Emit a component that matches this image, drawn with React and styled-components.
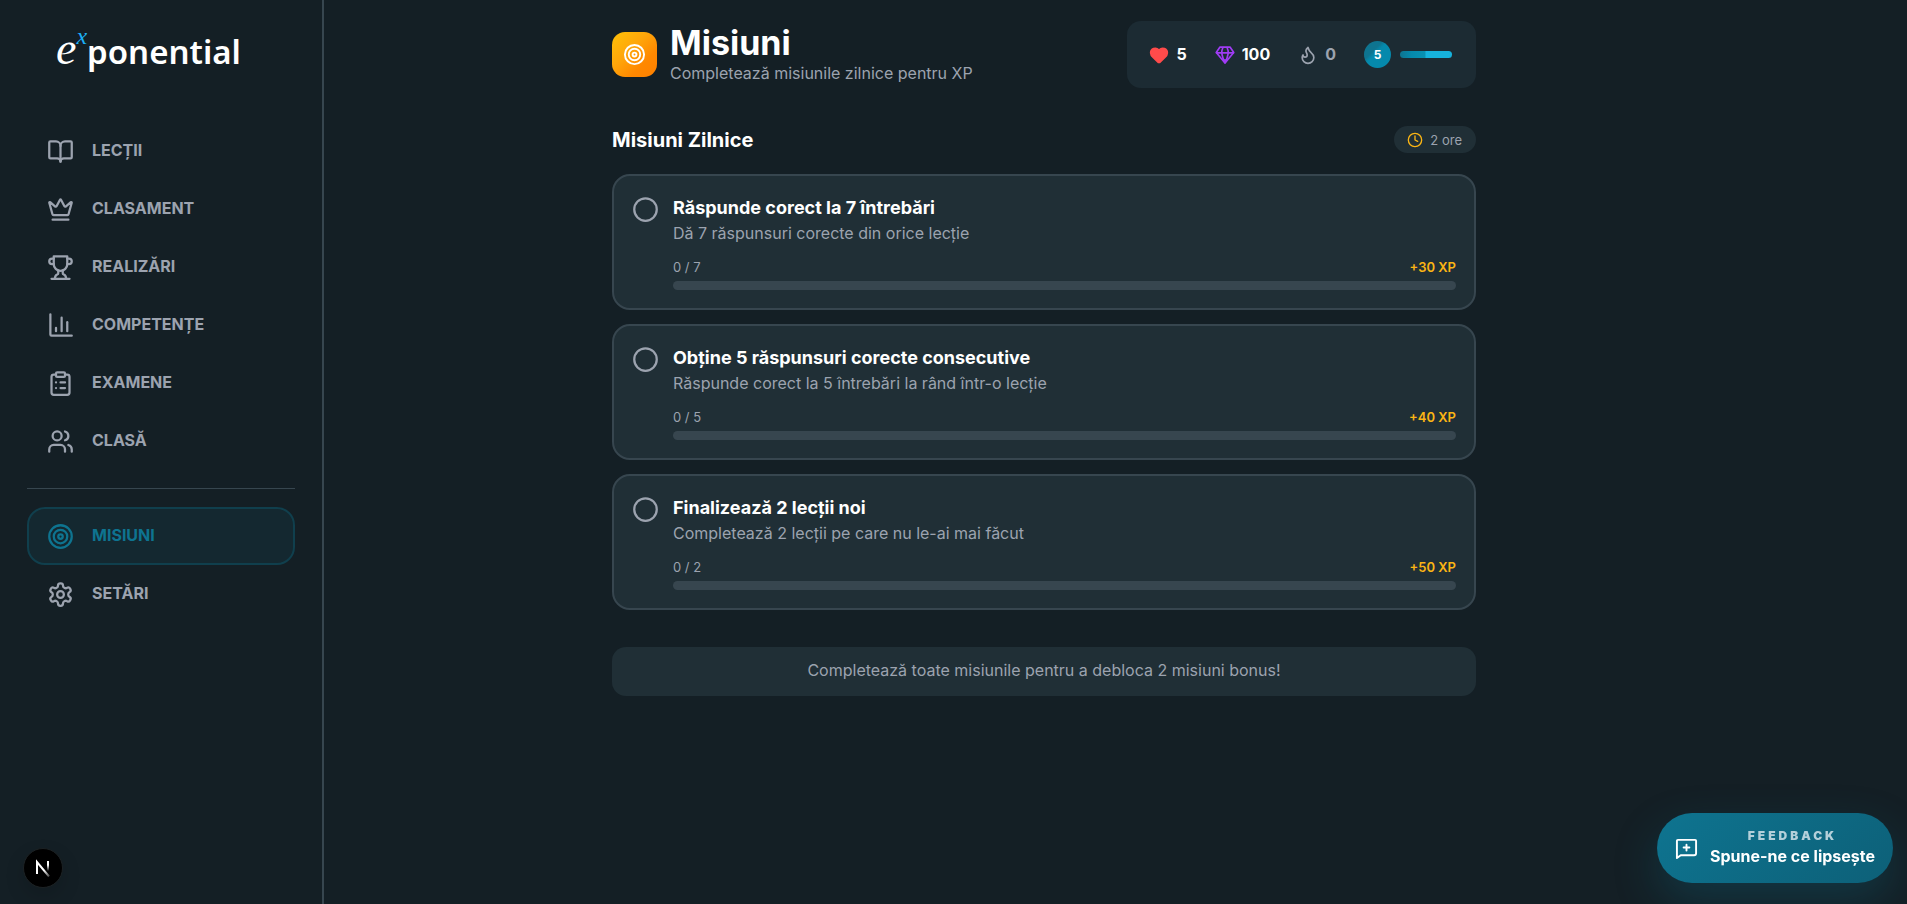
import React from "react";
import styled, { createGlobalStyle, css } from "styled-components";
import {
  BookOpen,
  Crown,
  Users,
  Target,
  Flame,
  Heart,
  Clock,
  Circle,
  ClipboardList,
} from "lucide-react";

const GlobalStyle = createGlobalStyle`
  *, *::before, *::after { box-sizing: border-box; }
  body {
    margin: 0;
    background: #141f25;
    color: #ffffff;
    font-family: Inter, "Liberation Sans", sans-serif;
    font-size: 16px;
  }
  h1, h2, h3, p, ul { margin: 0; padding: 0; }
  ul { list-style: none; }
`;

const Page = styled.div`
  display: flex;
  min-height: 100vh;
`;

const Sidebar = styled.aside`
  flex: 0 0 324px;
  border-right: 2px solid #37464f;
  padding: 25px 27px 18px;
`;

const Logo = styled.a`
  display: flex;
  align-items: baseline;
  padding-left: 29px;
  height: 97px;
  color: #ffffff;
  text-decoration: none;
  font: 600 33px/48px "Noto Sans", "Open Sans", sans-serif;
`;

const LogoE = styled.span`
  font: italic 400 46px/48px "Liberation Serif", serif;
`;

const LogoX = styled.sup`
  align-self: flex-start;
  color: #1cb0f6;
  font: italic 400 24px/22px "Liberation Serif", serif;
`;

const NavList = styled.ul`
  display: flex;
  flex-direction: column;
`;

const NavLink = styled.a`
  display: flex;
  align-items: center;
  gap: 18px;
  height: 58px;
  padding: 0 18px;
  border: 2px solid transparent;
  border-radius: 18px;
  color: #9ca3af;
  font-weight: 700;
  line-height: 24px;
  text-decoration: none;
  text-transform: uppercase;
  ${({ $active }) =>
    $active &&
    css`
      background: #142830;
      border-color: #103f4d;
      color: #0e7490;
    `}
  span { padding-bottom: 2px; }
`;

const Divider = styled.hr`
  height: 1px;
  margin: 18px 0;
  border: 0;
  background: #37464f;
`;

const Main = styled.main`
  flex: 0 1 1440px;
  min-width: 0;
`;

const Content = styled.div`
  width: 60%;
  min-width: 620px;
  margin: 0 auto;
  padding: 21px 0 36px;
`;

const Header = styled.header`
  display: flex;
  align-items: center;
  justify-content: space-between;
`;

const Heading = styled.div`
  display: flex;
  align-items: center;
  gap: 13px;
`;

const HeadingIcon = styled.div`
  display: grid;
  place-items: center;
  width: 45px;
  height: 45px;
  border-radius: 13px;
  background: linear-gradient(135deg, #ffc107 0%, #ffa60a 40%, #ff8800 70%, #ff8000 100%);
`;

const Title = styled.h1`
  font-size: 34px;
  font-weight: 700;
  line-height: 38px;
`;

const Subtitle = styled.p`
  color: #9ca3af;
  font-size: 16px;
  line-height: 23px;
`;

const Stats = styled.div`
  display: flex;
  align-items: center;
  gap: 28px;
  height: 67px;
  padding: 0 24px 0 22px;
  border-radius: 14px;
  background: #1c2b33;
`;

const Stat = styled.div`
  display: flex;
  align-items: center;
  gap: 7px;
  color: ${({ $muted }) => ($muted ? "#9ca3af" : "#ffffff")};
  font-weight: 700;
  line-height: 24px;
  span { padding-bottom: 2px; }
`;

const Level = styled.div`
  display: flex;
  align-items: center;
  gap: 9px;
`;

const LevelBadge = styled.span`
  display: grid;
  place-items: center;
  width: 27px;
  height: 27px;
  padding-bottom: 1px;
  border-radius: 50%;
  background: linear-gradient(135deg, #0e7490 35%, #0589ac 45%);
  font-size: 12px;
  font-weight: 700;
`;

const LevelBar = styled.div`
  width: 52px;
  height: 7px;
  border-radius: 4px;
  background: linear-gradient(90deg, #0e7490 0%, #0589ac 22%, #0891b2 48%, #16b2dc 50%);
`;

const SectionHead = styled.div`
  display: flex;
  align-items: center;
  justify-content: space-between;
  margin: 38px 0 21px;
`;

const SectionTitle = styled.h2`
  padding-top: 1px;
  font-size: 20px;
  font-weight: 700;
  line-height: 26px;
`;

const TimePill = styled.div`
  display: flex;
  align-items: center;
  gap: 7px;
  height: 27px;
  padding: 0 14px 0 13px;
  border-radius: 14px;
  background: #202f36;
  color: #9ca3af;
  font-size: 13px;
`;

const Missions = styled.ul`
  display: flex;
  flex-direction: column;
  gap: 14px;
`;

const Card = styled.li`
  display: flex;
  align-items: flex-start;
  gap: 14px;
  padding: 18px;
  border: 2px solid #37464f;
  border-radius: 18px;
  background: #202f36;
  > svg { flex: none; margin-top: 2px; color: #9ca3af; }
`;

const CardBody = styled.div`
  flex: 1;
`;

const CardTitle = styled.h3`
  font-size: 18px;
  font-weight: 700;
  line-height: 27px;
`;

const CardText = styled(Subtitle)`
  line-height: 25px;
`;

const ProgressRow = styled.div`
  display: flex;
  justify-content: space-between;
  margin: 12px 0 5px;
  color: #9ca3af;
  font-size: 13px;
  line-height: 18px;
`;

const Reward = styled.span`
  color: #fbb514;
  font-weight: 600;
`;

const Track = styled.div`
  height: 9px;
  border-radius: 5px;
  background: #37464f;
  overflow: hidden;
`;

const Fill = styled.div`
  height: 100%;
  background: #fbb514;
`;

const Note = styled.p`
  margin-top: 37px;
  padding: 12px 14px 14px;
  border-radius: 14px;
  background: #202f36;
  color: #9ca3af;
  line-height: 23px;
  text-align: center;
`;

const FeedbackButton = styled.button`
  position: fixed;
  right: 14px;
  bottom: 21px;
  display: flex;
  align-items: center;
  gap: 12px;
  height: 70px;
  padding: 0 18px;
  border: 0;
  border-radius: 35px;
  background: linear-gradient(135deg, #0e7490, #0d6078);
  box-shadow: 0 18px 45px rgba(14, 116, 144, 0.28);
  color: #ffffff;
  font-family: inherit;
`;

const FeedbackText = styled.span`
  display: flex;
  flex-direction: column;
  align-items: center;
  padding-bottom: 2px;
`;

const FeedbackLabel = styled.span`
  color: #b4d0da;
  font-size: 12px;
  font-weight: 900;
  letter-spacing: 3px;
  line-height: 18px;
`;

const FeedbackAction = styled.span`
  font-size: 16px;
  font-weight: 700;
  line-height: 23px;
`;

const DevBadge = styled.button`
  position: fixed;
  left: 23px;
  bottom: 16px;
  display: grid;
  place-items: center;
  width: 40px;
  height: 40px;
  padding: 0;
  border: 1px solid #1d2224;
  border-radius: 50%;
  background: #000000;
  box-shadow: 0 8px 20px rgba(0, 0, 0, 0.14);
`;

const stroke = {
  fill: "none",
  stroke: "currentColor",
  strokeWidth: 2,
  strokeLinecap: "round",
  strokeLinejoin: "round",
  viewBox: "0 0 24 24",
  "aria-hidden": true,
};

const TrophyIcon = ({ size }) => (
  <svg width={size} height={size} {...stroke}>
    <path d="M6 9H4.5a2.5 2.5 0 0 1 0-5H6" />
    <path d="M18 9h1.5a2.5 2.5 0 0 0 0-5H18" />
    <path d="M4 22h16" />
    <path d="M10 14.66V17c0 .55-.47.98-.97 1.21C7.85 18.75 7 20.24 7 22" />
    <path d="M14 14.66V17c0 .55.47.98.97 1.21C16.15 18.75 17 20.24 17 22" />
    <path d="M18 2H6v7a6 6 0 0 0 12 0V2Z" />
  </svg>
);

const ChartIcon = ({ size }) => (
  <svg width={size} height={size} {...stroke}>
    <path d="M3 2v18a1 1 0 0 0 1 1h18" />
    <path d="M8 17v-3" />
    <path d="M13 17V5" />
    <path d="M18 17V9" />
  </svg>
);

const GearIcon = ({ size }) => (
  <svg width={size} height={size} {...stroke}>
    <path d="M12.22 2h-.44a2 2 0 0 0-2 2v.18a2 2 0 0 1-1 1.73l-.43.25a2 2 0 0 1-2 0l-.15-.08a2 2 0 0 0-2.73.73l-.22.38a2 2 0 0 0 .73 2.73l.15.1a2 2 0 0 1 1 1.72v.51a2 2 0 0 1-1 1.74l-.15.09a2 2 0 0 0-.73 2.73l.22.38a2 2 0 0 0 2.73.73l.15-.08a2 2 0 0 1 2 0l.43.25a2 2 0 0 1 1 1.73V20a2 2 0 0 0 2 2h.44a2 2 0 0 0 2-2v-.18a2 2 0 0 1 1-1.73l.43-.25a2 2 0 0 1 2 0l.15.08a2 2 0 0 0 2.73-.73l.22-.39a2 2 0 0 0-.73-2.73l-.15-.08a2 2 0 0 1-1-1.74v-.5a2 2 0 0 1 1-1.74l.15-.09a2 2 0 0 0 .73-2.73l-.22-.38a2 2 0 0 0-2.73-.73l-.15.08a2 2 0 0 1-2 0l-.43-.25a2 2 0 0 1-1-1.73V4a2 2 0 0 0-2-2z" />
    <circle cx="12" cy="12" r="3" />
  </svg>
);

const GemIcon = () => (
  <svg width="20" height="20" {...stroke} stroke="#a03cf5">
    <path d="M6 2.500h12l4.500 6.500L12 21.500 1.500 9Z" />
    <path d="M9.500 3C7.500 7 7.500 13 12 21" />
    <path d="M14.500 3c2 4 2 10-2.500 18" />
    <path d="M2 9.500h20" />
    <path d="M10 18h4l-2 3Z" fill="#a03cf5" />
  </svg>
);

const MessageIcon = () => (
  <svg width="23" height="23" {...stroke}>
    <path d="M22 17a2 2 0 0 1-2 2H6l-4 3V4a1 1 0 0 1 1-1h18a1 1 0 0 1 1 1Z" />
    <path d="M12 8v6M9 11h6" />
  </svg>
);

const NextMark = () => (
  <svg width="16" height="18" viewBox="0 0 16 18" fill="none" aria-hidden="true">
    <defs>
      <linearGradient id="stem" x1="0" y1="2" x2="0" y2="12" gradientUnits="userSpaceOnUse">
        <stop offset="0.4" stopColor="#fff" />
        <stop offset="1" stopColor="#fff" stopOpacity="0" />
      </linearGradient>
      <linearGradient id="slash" x1="8" y1="9" x2="15" y2="18" gradientUnits="userSpaceOnUse">
        <stop offset="0.2" stopColor="#fff" />
        <stop offset="1" stopColor="#fff" stopOpacity="0.2" />
      </linearGradient>
    </defs>
    <path d="M2 15V3L14 17.500" stroke="url(#slash)" strokeWidth="2" />
    <path d="M13 2v11" stroke="url(#stem)" strokeWidth="2" />
  </svg>
);

const mainNav = [
  { label: "Lecții", Icon: BookOpen },
  { label: "Clasament", Icon: Crown },
  { label: "Realizări", Icon: TrophyIcon },
  { label: "Competențe", Icon: ChartIcon },
  { label: "Examene", Icon: ClipboardList },
  { label: "Clasă", Icon: Users },
];

const extraNav = [
  { label: "Misiuni", Icon: Target, active: true },
  { label: "Setări", Icon: GearIcon },
];

const missions = [
  { title: "Răspunde corect la 7 întrebări", text: "Dă 7 răspunsuri corecte din orice lecție", done: 0, goal: 7, xp: 30 },
  { title: "Obține 5 răspunsuri corecte consecutive", text: "Răspunde corect la 5 întrebări la rând într-o lecție", done: 0, goal: 5, xp: 40 },
  { title: "Finalizează 2 lecții noi", text: "Completează 2 lecții pe care nu le-ai mai făcut", done: 0, goal: 2, xp: 50 },
];

const NavGroup = ({ items }) => (
  <NavList>
    {items.map(({ label, Icon, active }) => (
      <li key={label}>
        <NavLink href="#" $active={active} aria-current={active ? "page" : undefined}>
          <Icon size={27} />
          <span>{label}</span>
        </NavLink>
      </li>
    ))}
  </NavList>
);

export default function App() {
  return (
    <>
      <GlobalStyle />
      <Page>
        <Sidebar>
          <Logo href="#">
            <LogoE>e</LogoE>
            <LogoX>x</LogoX>
            <span>ponential</span>
          </Logo>
          <nav>
            <NavGroup items={mainNav} />
            <Divider />
            <NavGroup items={extraNav} />
          </nav>
        </Sidebar>
        <Main>
          <Content>
            <Header>
              <Heading>
                <HeadingIcon>
                  <Target size={23} />
                </HeadingIcon>
                <div>
                  <Title>Misiuni</Title>
                  <Subtitle>Completează misiunile zilnice pentru XP</Subtitle>
                </div>
              </Heading>
              <Stats>
                <Stat>
                  <Heart size={20} color="#ff4b4b" fill="#ff4b4b" />
                  <span>5</span>
                </Stat>
                <Stat>
                  <GemIcon />
                  <span>100</span>
                </Stat>
                <Stat $muted>
                  <Flame size={20} />
                  <span>0</span>
                </Stat>
                <Level>
                  <LevelBadge>5</LevelBadge>
                  <LevelBar />
                </Level>
              </Stats>
            </Header>
            <SectionHead>
              <SectionTitle>Misiuni Zilnice</SectionTitle>
              <TimePill>
                <Clock size={16} color="#fbb514" />
                2 ore
              </TimePill>
            </SectionHead>
            <Missions>
              {missions.map((m) => (
                <Card key={m.title}>
                  <Circle size={27} />
                  <CardBody>
                    <CardTitle>{m.title}</CardTitle>
                    <CardText>{m.text}</CardText>
                    <ProgressRow>
                      <span>{`${m.done} / ${m.goal}`}</span>
                      <Reward>{`+${m.xp} XP`}</Reward>
                    </ProgressRow>
                    <Track>
                      <Fill style={{ width: `${(m.done / m.goal) * 100}%` }} />
                    </Track>
                  </CardBody>
                </Card>
              ))}
            </Missions>
            <Note>Completează toate misiunile pentru a debloca 2 misiuni bonus!</Note>
          </Content>
        </Main>
      </Page>
      <FeedbackButton type="button">
        <MessageIcon />
        <FeedbackText>
          <FeedbackLabel>FEEDBACK</FeedbackLabel>
          <FeedbackAction>Spune-ne ce lipsește</FeedbackAction>
        </FeedbackText>
      </FeedbackButton>
      <DevBadge type="button" aria-label="Next.js">
        <NextMark />
      </DevBadge>
    </>
  );
}
